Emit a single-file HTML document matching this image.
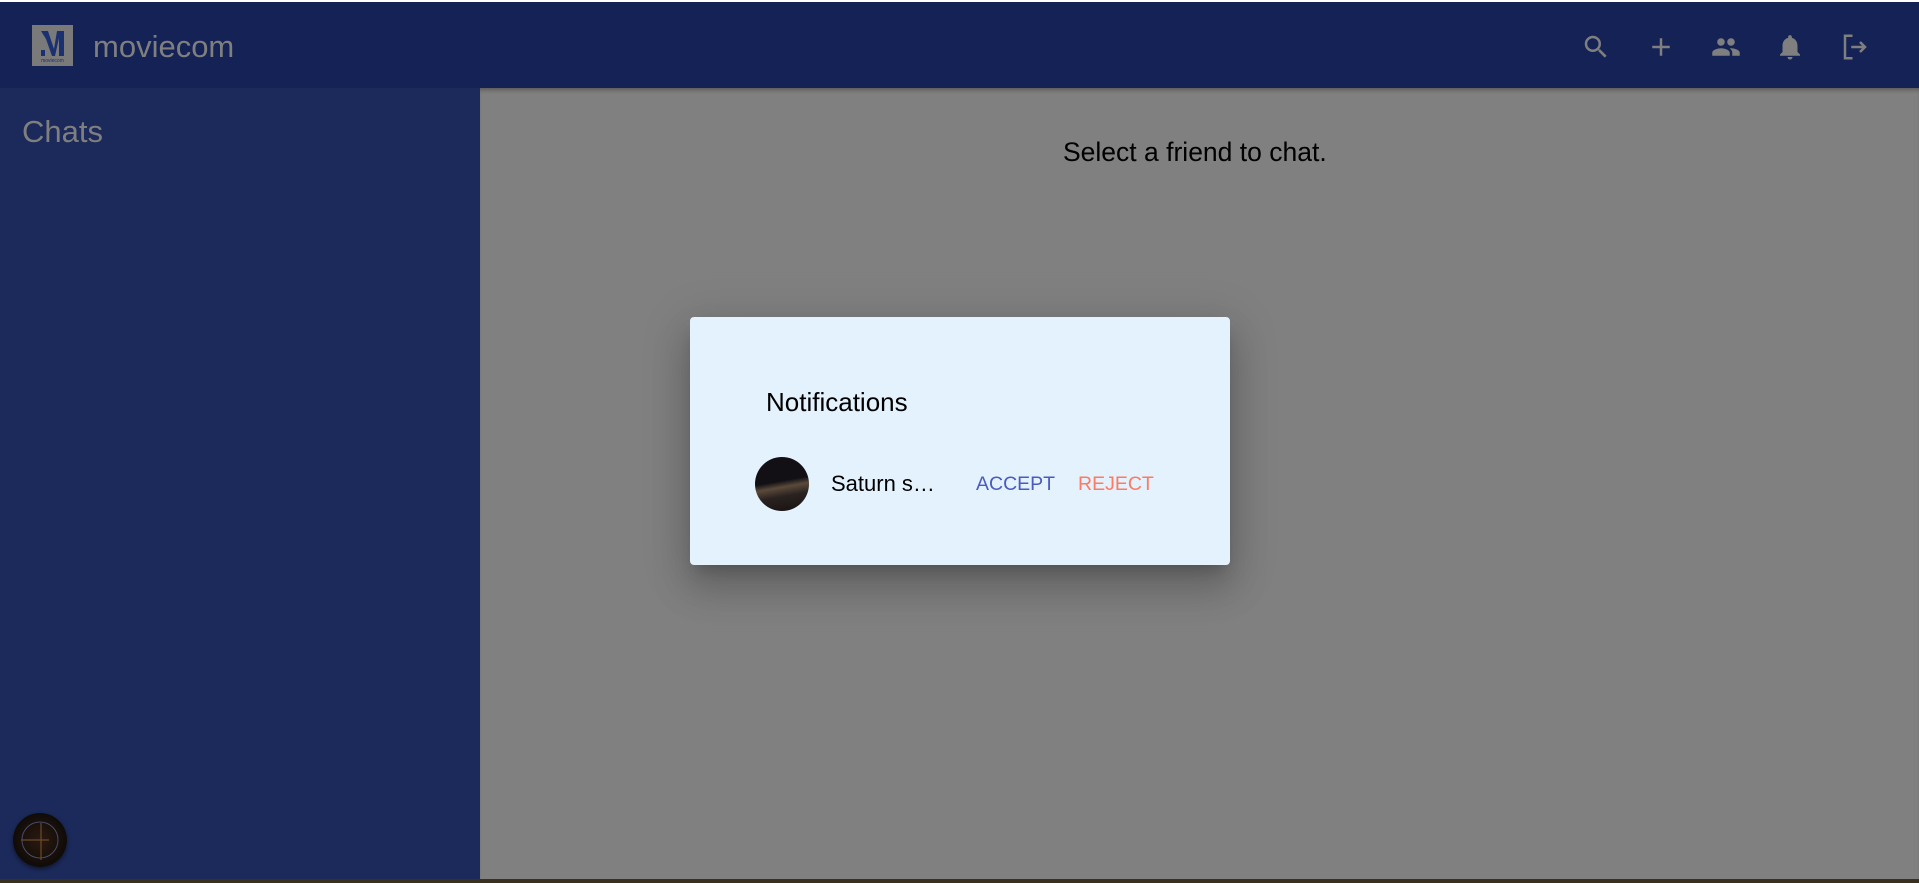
<!DOCTYPE html>
<html><head><meta charset="utf-8"><style>
*{margin:0;padding:0;box-sizing:border-box}
html,body{width:1919px;height:883px;overflow:hidden;background:#fff;font-family:"Liberation Sans",sans-serif}
.hdr{position:absolute;left:0;top:2px;width:1919px;height:86px;background:#142255}
.logo{position:absolute;left:32px;top:23px;width:41px;height:41px;background:#7a7a7a}
.brand{position:absolute;left:93px;top:27px;font-size:31px;color:#7f7f7f}
.side{position:absolute;left:0;top:88px;width:480px;height:791px;background:#1b2a5a}
.chats{position:absolute;left:22px;top:26px;font-size:31px;color:#7f7f7f}
.main{position:absolute;left:480px;top:88px;width:1439px;height:791px;background:#808080;box-shadow:inset 0 4px 4px -2px rgba(0,0,0,.3)}
.bot{position:absolute;left:0;top:879px;width:1919px;height:4px;background:#3a3020}
.sel{position:absolute;left:1063px;top:137px;font-size:26.5px;color:#000}
.dlg{position:absolute;left:690px;top:317px;width:540px;height:248px;background:#e3f2fd;border-radius:4px;box-shadow:0 11px 15px -7px rgba(0,0,0,.2),0 24px 38px 3px rgba(0,0,0,.14),0 9px 46px 8px rgba(0,0,0,.12)}
.nt{position:absolute;left:76px;top:70px;font-size:26px;color:#000}
.av{position:absolute;left:65px;top:140px;width:54px;height:54px;border-radius:50%;background:linear-gradient(170deg,#121015 0 45%,#5a4a3a 55%,#2a2220 70%,#15110f)}
.nm{position:absolute;left:141px;top:154px;font-size:22px;color:#000}
.acc{position:absolute;left:286px;top:156px;font-size:19.5px;color:#4a5bc0}
.rej{position:absolute;left:388px;top:156px;font-size:19.5px;color:#ff7a63}
.ic{position:absolute;top:30px}
.ua{position:absolute;left:13px;top:813px;width:54px;height:54px;border-radius:50%;background:radial-gradient(circle,#2a1a10,#050505);box-shadow:0 2px 4px rgba(0,0,0,.5)}
</style></head><body>
<div class="hdr">
<div class="logo"><svg width="41" height="41" viewBox="0 0 41 41"><path d="M9 6h7l6 18 3-18h7v25h-5V13l-4 18h-3L14 14" fill="#1b3070"/><rect x="9" y="25" width="4" height="6" fill="#1b3070"/><text x="20.5" y="37" font-size="5" text-anchor="middle" fill="#1b3070" font-family="Liberation Sans">moviecom</text></svg></div>
<div class="brand">moviecom</div>
<svg class="ic" style="left:1581px" width="30" height="30" viewBox="0 0 24 24"><path fill="#7f7f7f" d="M15.5 14h-.79l-.28-.27A6.47 6.47 0 0 0 16 9.5 6.5 6.5 0 1 0 9.5 16c1.61 0 3.09-.59 4.23-1.57l.27.28v.79l5 4.99L20.49 19l-4.99-5zm-6 0C7.01 14 5 11.99 5 9.5S7.01 5 9.5 5 14 7.01 14 9.5 11.99 14 9.5 14z"/></svg>
<svg class="ic" style="left:1646px" width="30" height="30" viewBox="0 0 24 24"><path fill="#7f7f7f" d="M19 13h-6v6h-2v-6H5v-2h6V5h2v6h6v2z"/></svg>
<svg class="ic" style="left:1710px" width="32" height="30" viewBox="0 0 24 24"><path fill="#7f7f7f" d="M16 11c1.66 0 2.99-1.34 2.99-3S17.66 5 16 5c-1.66 0-3 1.34-3 3s1.34 3 3 3zm-8 0c1.66 0 2.99-1.34 2.99-3S9.66 5 8 5C6.34 5 5 6.34 5 8s1.34 3 3 3zm0 2c-2.33 0-7 1.17-7 3.5V19h14v-2.5c0-2.33-4.67-3.5-7-3.5zm8 0c-.29 0-.62.02-.97.05 1.160.84 1.97 1.97 1.97 3.45V19h6v-2.5c0-2.33-4.67-3.5-7-3.5z"/></svg>
<svg class="ic" style="left:1775px" width="30" height="30" viewBox="0 0 24 24"><path fill="#7f7f7f" d="M12 22c1.1 0 2-.9 2-2h-4c0 1.1.89 2 2 2zm6-6v-5c0-3.07-1.640-5.64-4.5-6.32V4c0-.83-.67-1.5-1.5-1.5s-1.5.67-1.5 1.5v.68C7.63 5.36 6 7.92 6 11v5l-2 2v1h16v-1l-2-2z"/></svg>
<svg class="ic" style="left:1840px" width="30" height="30" viewBox="0 0 24 24"><path fill="none" stroke="#7f7f7f" stroke-width="2" d="M10 3H4v18h6M9 12h11M16 8l4 4-4 4"/></svg>
</div>
<div class="side"><div class="chats">Chats</div></div>
<div class="main"></div>
<div class="sel">Select a friend to chat.</div>
<div class="ua"><svg width="54" height="54" viewBox="0 0 54 54"><circle cx="27" cy="27" r="18" fill="none" stroke="#4a4a6a" stroke-width="1"/><path d="M28 10v37M8 27h28" stroke="#6a4a2a" stroke-width="1.2"/></svg></div>
<div class="bot"></div>
<div class="dlg">
<div class="nt">Notifications</div>
<div class="av"></div>
<div class="nm">Saturn s…</div>
<div class="acc">ACCEPT</div>
<div class="rej">REJECT</div>
</div>
</body></html>
